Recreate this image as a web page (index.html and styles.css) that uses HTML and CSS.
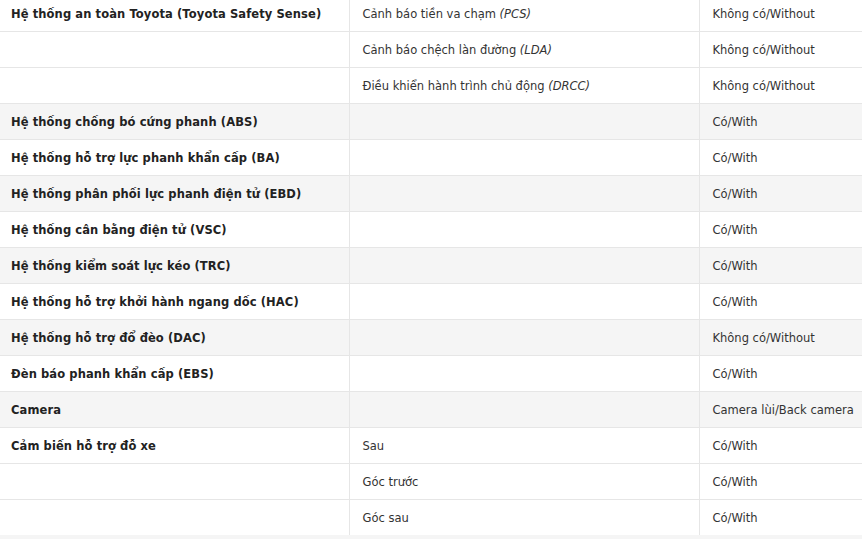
FILE: index.html
```html
<!DOCTYPE html>
<html lang="vi">
<head>
    <meta charset="UTF-8">
    <meta name="viewport" content="width=device-width, initial-scale=1.0">
    <title>Thông số an toàn</title>
    <link rel="stylesheet" href="styles.css">
</head>
<body>
    <table class="spec-table">
        <colgroup>
            <col class="col-name">
            <col class="col-detail">
            <col class="col-value">
        </colgroup>
        <tbody>
            <tr>
                <td class="spec-name">Hệ thống an toàn Toyota (Toyota Safety Sense)</td>
                <td>Cảnh báo tiền va chạm <em>(PCS)</em></td>
                <td>Không có/Without</td>
            </tr>
            <tr>
                <td class="spec-name"></td>
                <td>Cảnh báo chệch làn đường <em>(LDA)</em></td>
                <td>Không có/Without</td>
            </tr>
            <tr>
                <td class="spec-name"></td>
                <td>Điều khiển hành trình chủ động <em>(DRCC)</em></td>
                <td>Không có/Without</td>
            </tr>
            <tr class="alt">
                <td class="spec-name">Hệ thống chống bó cứng phanh (ABS)</td>
                <td></td>
                <td>Có/With</td>
            </tr>
            <tr>
                <td class="spec-name">Hệ thống hỗ trợ lực phanh khẩn cấp (BA)</td>
                <td></td>
                <td>Có/With</td>
            </tr>
            <tr class="alt">
                <td class="spec-name">Hệ thống phân phối lực phanh điện tử (EBD)</td>
                <td></td>
                <td>Có/With</td>
            </tr>
            <tr>
                <td class="spec-name">Hệ thống cân bằng điện tử (VSC)</td>
                <td></td>
                <td>Có/With</td>
            </tr>
            <tr class="alt">
                <td class="spec-name">Hệ thống kiểm soát lực kéo (TRC)</td>
                <td></td>
                <td>Có/With</td>
            </tr>
            <tr>
                <td class="spec-name">Hệ thống hỗ trợ khởi hành ngang dốc (HAC)</td>
                <td></td>
                <td>Có/With</td>
            </tr>
            <tr class="alt">
                <td class="spec-name">Hệ thống hỗ trợ đổ đèo (DAC)</td>
                <td></td>
                <td>Không có/Without</td>
            </tr>
            <tr>
                <td class="spec-name">Đèn báo phanh khẩn cấp (EBS)</td>
                <td></td>
                <td>Có/With</td>
            </tr>
            <tr class="alt">
                <td class="spec-name">Camera</td>
                <td></td>
                <td>Camera lùi/Back camera</td>
            </tr>
            <tr>
                <td class="spec-name">Cảm biến hỗ trợ đỗ xe</td>
                <td>Sau</td>
                <td>Có/With</td>
            </tr>
            <tr>
                <td class="spec-name"></td>
                <td>Góc trước</td>
                <td>Có/With</td>
            </tr>
            <tr>
                <td class="spec-name"></td>
                <td>Góc sau</td>
                <td>Có/With</td>
            </tr>
        </tbody>
    </table>
</body>
</html>
```

FILE: styles.css
```css
:root {
    --text-color: #333;
    --name-color: #222;
    --border-color: #e6e6e6;
    --alt-color: #f5f5f5;
}

* {
    box-sizing: border-box;
    margin: 0;
    padding: 0;
}

body {
    background: var(--alt-color);
    color: var(--text-color);
    font-family: "DejaVu Sans", Verdana, sans-serif;
    font-size: 11.5px;
    overflow: hidden;
}

.spec-table {
    width: 862px;
    margin-top: -5px;
    background: white;
    border-collapse: collapse;
    table-layout: fixed;
}

.col-name {
    width: 349px;
}

.col-detail {
    width: 350px;
}

.spec-table td {
    height: 36px;
    padding: 2px 12px 0 13px;
    border-top: 1px solid var(--border-color);
    border-left: 1px solid var(--border-color);
    white-space: nowrap;
    vertical-align: middle;
}

.spec-table td:first-child {
    border-left: none;
}

.spec-table tr:first-child td {
    border-top: none;
}

.spec-table .spec-name {
    font-weight: bold;
    color: var(--name-color);
    padding-left: 11px;
    letter-spacing: 0.1px;
}

.spec-table em {
    font-style: italic;
}

.alt td {
    background-color: var(--alt-color);
}
```
